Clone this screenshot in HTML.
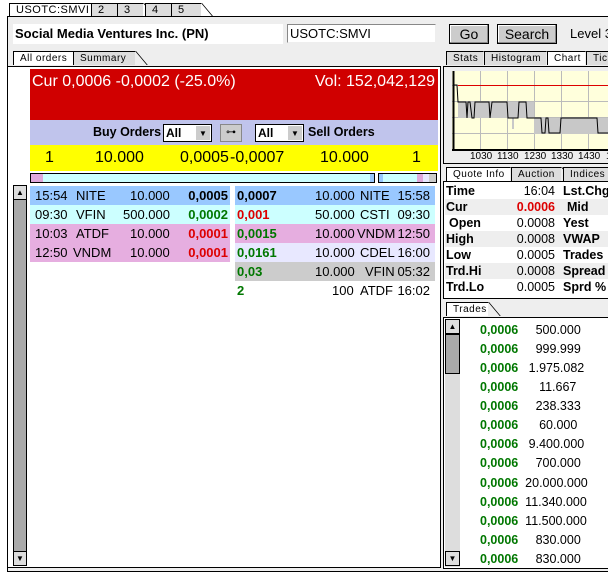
<!DOCTYPE html>
<html><head><style>
*{margin:0;padding:0;box-sizing:border-box}
body{width:608px;height:573px;background:#fff;font-family:"Liberation Sans",Arial,sans-serif;position:relative;overflow:hidden}
.a{position:absolute}
.tab{position:absolute;height:14px;border:1px solid #000;border-bottom:none;border-right:none;background:#ddd;font-size:11px;letter-spacing:.5px;padding-left:6px;line-height:13px;white-space:nowrap}
.tab::after{content:"";position:absolute;right:-1px;top:-1px;width:1px;height:14px;background:#000;transform:skewX(40deg);transform-origin:top}
.tab.w{background:#fff}
.b{font-weight:bold}
.row{position:absolute;height:19px;font-size:13px;line-height:19px}
.row span{position:absolute}
.g{color:#007700}.r{color:#dd0000}
.btn{position:absolute;background:#ccc;border:1px solid #000;box-shadow:inset -1px -1px #888,inset 1px 1px #fff;font-size:14px;text-align:center;line-height:18px}
.q{position:absolute;left:445px;width:165px;height:16px;font-size:12.5px;line-height:16px}
.q span{position:absolute;white-space:nowrap}
.q .v{right:55px}
.q .l{left:118px}
</style></head><body>
<div class="tab w" style="left:9px;top:3px;width:82px">USOTC:SMVI</div>
<div class="tab" style="left:91px;top:3px;width:26px">2</div>
<div class="tab" style="left:117px;top:3px;width:26px">3</div>
<div class="tab" style="left:145px;top:3px;width:26px">4</div>
<div class="tab" style="left:171px;top:3px;width:30px">5</div>
<div class="a" style="left:7px;top:16px;width:610px;height:556px;border:1px solid #000;background:#eee"></div>
<div class="a b" style="left:13px;top:24px;width:270px;height:20px;background:#fff;font-size:13px;line-height:20px;padding-left:2px">Social Media Ventures Inc. (PN)</div>
<div class="a" style="left:287px;top:24px;width:149px;height:19px;background:#fff;border:1px solid #888;border-right-color:#eee;border-bottom-color:#eee;font-size:13px;line-height:17px;padding-left:2px">USOTC:SMVI</div>
<div class="btn" style="left:449px;top:24px;width:40px;height:20px">Go</div>
<div class="btn" style="left:497px;top:24px;width:60px;height:20px">Search</div>
<div class="a" style="left:570px;top:24px;font-size:13px;line-height:20px;white-space:nowrap">Level 3</div>
<div class="tab w" style="left:13px;top:51px;width:60px;font-size:10px">All orders</div>
<div class="tab" style="left:73px;top:51px;width:62px;font-size:10px">Summary</div>
<div class="a" style="left:7px;top:66px;width:434px;height:502px;border:1px solid #000;background:#fff"></div>
<div class="a" style="left:30px;top:69px;width:408px;height:51px;background:#d00000;color:#fff;font-size:16px"><span class="a" style="left:2px;top:4px">Cur 0,0006 -0,0002 (-25.0%)</span><span class="a" style="right:3px;top:4px">Vol: 152,042,129</span></div>
<div class="a" style="left:30px;top:120px;width:408px;height:25px;background:#c0c4ec"></div>
<div class="a b" style="left:93px;top:125px;font-size:12.5px">Buy Orders</div>
<div class="a" style="left:163px;top:124px;width:49px;height:18px;background:#fff;border:1px solid #000;font-size:12px;font-weight:bold;padding-left:2px;line-height:16px">All<span class="a" style="right:1px;top:1px;width:14px;height:14px;background:#ccc;font-size:8px;text-align:center">▼</span></div>
<div class="a" style="left:220px;top:124px;width:22px;height:18px;background:#ccc;border:1px solid #888;font-size:10px;text-align:center;line-height:16px">⊶</div>
<div class="a" style="left:255px;top:124px;width:49px;height:18px;background:#fff;border:1px solid #000;font-size:12px;font-weight:bold;padding-left:2px;line-height:16px">All<span class="a" style="right:1px;top:1px;width:14px;height:14px;background:#ccc;font-size:8px;text-align:center">▼</span></div>
<div class="a b" style="left:308px;top:125px;font-size:12.5px">Sell Orders</div>
<div class="a" style="left:30px;top:145px;width:408px;height:26px;background:#ff0;font-size:16px;line-height:26px">
<span class="a" style="left:15px">1</span><span class="a" style="left:65px">10.000</span><span class="a" style="left:150px">0,0005</span><span class="a" style="left:200px">-0,0007</span><span class="a" style="left:290px">10.000</span><span class="a" style="left:382px">1</span></div>
<div class="a" style="left:30px;top:173px;width:345px;height:10px;border:1px solid #000;background:#cff"><div class="a" style="left:0;top:0;width:12px;height:8px;background:#e0a8dc"></div><div class="a" style="right:0;top:0;width:4px;height:8px;background:#99c8ff"></div></div>
<div class="a" style="left:378px;top:173px;width:59px;height:10px;border:1px solid #000;background:#cff"><div class="a" style="left:0;top:0;width:4px;height:8px;background:#99c8ff"></div><div class="a" style="left:38px;top:0;width:6px;height:8px;background:#e0a8dc"></div><div class="a" style="left:44px;top:0;width:6px;height:8px;background:#e8e8ff"></div><div class="a" style="left:50px;top:0;width:7px;height:8px;background:#ccc"></div></div>
<div class="a" style="left:13px;top:185px;width:14px;height:381px;background:#aaa;border:1px solid #000"></div>
<div class="a" style="left:13px;top:185px;width:14px;height:15px;background:#ddd;border:1px solid #000;font-size:8px;text-align:center;line-height:13px">▲</div>
<div class="a" style="left:13px;top:551px;width:14px;height:15px;background:#ddd;border:1px solid #000;font-size:8px;text-align:center;line-height:13px">▼</div>
<div class="row" style="left:30px;top:186px;width:200px;background:#99c8ff"><span style="left:5px">15:54</span><span style="left:46px">NITE</span><span style="left:100px">10.000</span><span class="b" style="right:2px">0,0005</span></div>
<div class="row" style="left:30px;top:205px;width:200px;background:#cff"><span style="left:5px">09:30</span><span style="left:46px">VFIN</span><span style="left:93px">500.000</span><span class="b g" style="right:2px">0,0002</span></div>
<div class="row" style="left:30px;top:224px;width:200px;background:#e6aee0"><span style="left:5px">10:03</span><span style="left:46px">ATDF</span><span style="left:100px">10.000</span><span class="b r" style="right:2px">0,0001</span></div>
<div class="row" style="left:30px;top:243px;width:200px;background:#e6aee0"><span style="left:5px">12:50</span><span style="left:43px">VNDM</span><span style="left:100px">10.000</span><span class="b r" style="right:2px">0,0001</span></div>
<div class="row" style="left:235px;top:186px;width:200px;background:#99c8ff"><span class="b" style="left:2px">0,0007</span><span style="left:80px">10.000</span><span style="left:125px">NITE</span><span style="right:5px">15:58</span></div>
<div class="row" style="left:235px;top:205px;width:200px;background:#cff"><span class="b r" style="left:2px">0,001</span><span style="left:80px">50.000</span><span style="left:125px">CSTI</span><span style="right:5px">09:30</span></div>
<div class="row" style="left:235px;top:224px;width:200px;background:#e6aee0"><span class="b g" style="left:2px">0,0015</span><span style="left:80px">10.000</span><span style="left:122px">VNDM</span><span style="right:5px">12:50</span></div>
<div class="row" style="left:235px;top:243px;width:200px;background:#e8e8ff"><span class="b g" style="left:2px">0,0161</span><span style="left:80px">10.000</span><span style="left:125px">CDEL</span><span style="right:5px">16:00</span></div>
<div class="row" style="left:235px;top:262px;width:200px;background:#ccc"><span class="b g" style="left:2px">0,03</span><span style="left:80px">10.000</span><span style="left:130px">VFIN</span><span style="right:5px">05:32</span></div>
<div class="row" style="left:235px;top:281px;width:200px"><span class="b g" style="left:2px">2</span><span style="left:97px">100</span><span style="left:125px">ATDF</span><span style="right:5px">16:02</span></div>
<!-- right -->
<div class="tab" style="left:446px;top:51px;width:37px;font-size:10px">Stats</div>
<div class="tab" style="left:484px;top:51px;width:62px;font-size:10px">Histogram</div>
<div class="tab w" style="left:547px;top:51px;width:38px;font-size:10px">Chart</div>
<div class="tab" style="left:586px;top:51px;width:30px;font-size:10px">Tic</div>
<div class="a" style="left:443px;top:66px;width:170px;height:98px;border:1px solid #000;background:#eee"></div>
<svg class="a" style="left:452px;top:71px" width="160" height="80">
<rect x="0" y="0" width="160" height="80" fill="#ffffdc"/>
<g stroke="#bbb" stroke-width="1"><line x1="28.5" y1="0" x2="28.5" y2="80"/><line x1="55.5" y1="0" x2="55.5" y2="80"/><line x1="82.5" y1="0" x2="82.5" y2="80"/><line x1="109.5" y1="0" x2="109.5" y2="80"/><line x1="136.5" y1="0" x2="136.5" y2="80"/><line x1="0" y1="14.5" x2="160" y2="14.5"/><line x1="0" y1="30.5" x2="160" y2="30.5"/><line x1="0" y1="46.5" x2="160" y2="46.5"/><line x1="0" y1="62.5" x2="160" y2="62.5"/></g>
<rect x="6" y="31" width="76" height="16" fill="#c8c8c8"/><rect x="82" y="47" width="78" height="16" fill="#c8c8c8"/><rect x="60" y="47" width="2" height="11" fill="#c8c8c8"/>
<line x1="6" y1="14.5" x2="160" y2="14.5" stroke="#d00"/>
<polyline fill="none" stroke="#000" points="2,14 5,14 6,31 14,31 15,47 16,31 18,31 20,47 22,47 23,31 37,31 38,47 40,31 55,31 56,47 66,47 67,31 74,31 75,47 89,47 90,62 93,62 94,47 96,47 97,62 108,62 109,47 145,47 146,62 160,62"/>
<line x1="1.5" y1="0" x2="1.5" y2="80" stroke="#000" stroke-width="2"/>
<line x1="0" y1="79" x2="160" y2="79" stroke="#000" stroke-width="2"/>
</svg>
<div class="a" style="left:452px;top:151px;width:160px;height:12px;background:#eee;font-size:10px;line-height:12px"><span class="a" style="left:18px">1030</span><span class="a" style="left:45px">1130</span><span class="a" style="left:72px">1230</span><span class="a" style="left:99px">1330</span><span class="a" style="left:126px">1430</span><span class="a" style="left:154px">1</span></div>
<div class="tab w" style="left:446px;top:167px;width:64px;font-size:10px">Quote Info</div>
<div class="tab" style="left:511px;top:167px;width:50px;font-size:10px">Auction</div>
<div class="tab" style="left:563px;top:167px;width:50px;font-size:10px">Indices</div>
<div class="a" style="left:443px;top:181px;width:170px;height:118px;border:1px solid #000;background:#fff"></div>
<div class="q" style="top:183px"><span class="b" style="left:1px">Time</span><span class="v">16:04</span><span class="b l">Lst.Chg</span></div>
<div class="q" style="top:199px;background:#eee"><span class="b" style="left:1px">Cur</span><span class="b r v">0.0006</span><span class="b" style="left:122px">Mid</span></div>
<div class="q" style="top:215px"><span class="b" style="left:4px">Open</span><span class="v">0.0008</span><span class="b l">Yest</span></div>
<div class="q" style="top:231px;background:#eee"><span class="b" style="left:1px">High</span><span class="v">0.0008</span><span class="b l">VWAP</span></div>
<div class="q" style="top:247px"><span class="b" style="left:1px">Low</span><span class="v">0.0005</span><span class="b l">Trades</span></div>
<div class="q" style="top:263px;background:#eee"><span class="b" style="left:1px">Trd.Hi</span><span class="v">0.0008</span><span class="b l">Spread</span></div>
<div class="q" style="top:279px"><span class="b" style="left:1px">Trd.Lo</span><span class="v">0.0005</span><span class="b l">Sprd %</span></div>
<div class="tab w" style="left:446px;top:302px;width:42px;font-size:10px">Trades</div>
<div class="a" style="left:443px;top:317px;width:170px;height:252px;border:1px solid #000;background:#fff"></div>
<div class="a" style="left:445px;top:319px;width:15px;height:248px;background:#ddd"></div>
<div class="a" style="left:445px;top:319px;width:15px;height:15px;background:#ddd;border:1px solid #000;font-size:8px;text-align:center;line-height:13px">▲</div>
<div class="a" style="left:445px;top:334px;width:15px;height:40px;background:#aaa;border:1px solid #000"></div>
<div class="a" style="left:445px;top:551px;width:15px;height:15px;background:#ddd;border:1px solid #000;font-size:8px;text-align:center;line-height:13px">▼</div>
<div class="a" style="left:480px;top:321px;font-size:12.5px;line-height:19.07px;white-space:pre"><b class="g">0,0006</b>     500.000
<b class="g">0,0006</b>     999.999
<b class="g">0,0006</b>   1.975.082
<b class="g">0,0006</b>      11.667
<b class="g">0,0006</b>     238.333
<b class="g">0,0006</b>      60.000
<b class="g">0,0006</b>   9.400.000
<b class="g">0,0006</b>     700.000
<b class="g">0,0006</b>  20.000.000
<b class="g">0,0006</b>  11.340.000
<b class="g">0,0006</b>  11.500.000
<b class="g">0,0006</b>     830.000
<b class="g">0,0006</b>     830.000</div>
</body></html>
